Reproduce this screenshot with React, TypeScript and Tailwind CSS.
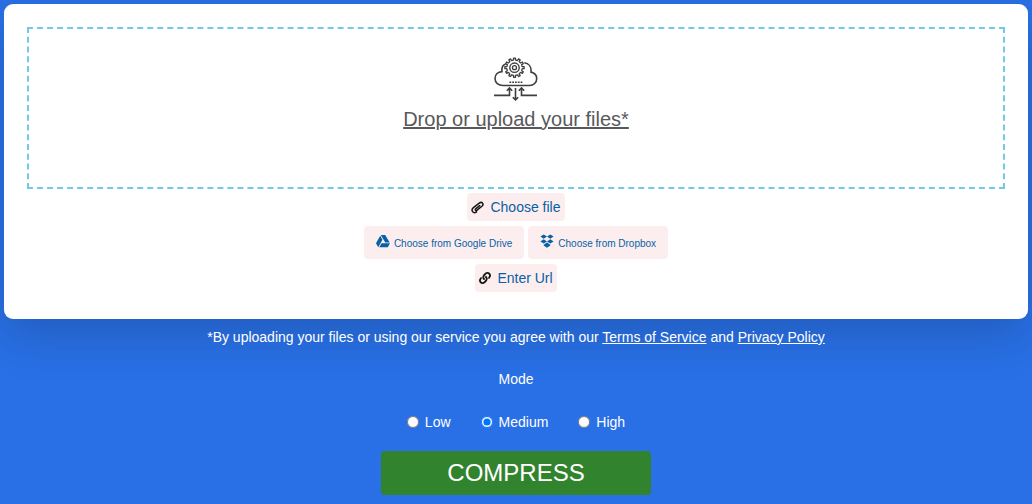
import { FaGoogleDrive, FaLink } from "react-icons/fa";

const MODES = ["Low", "Medium", "High"];

const GEAR_OUTLINE = Array.from({ length: 12 }, (_, tooth) =>
  [
    [-0.5, 7.6],
    [-0.24, 7.8],
    [-0.19, 9.7],
    [0.19, 9.7],
    [0.24, 7.8],
  ]
    .map(([offset, radius]) => {
      const angle = ((tooth + offset) * Math.PI) / 6;
      return `${(20.5 + radius * Math.sin(angle)).toFixed(2)},${(10.7 - radius * Math.cos(angle)).toFixed(2)}`;
    })
    .join(" "),
).join(" ");

function CloudUploadIcon() {
  return (
    <svg
      width="44"
      height="44"
      viewBox="0 0 44 44"
      fill="none"
      stroke="#3d3f40"
      strokeWidth="1.6"
      aria-hidden="true"
    >
      <path d="M9 28.500C4.500 28.500 1 25.600 1 21.500c0-4 3-6.700 7-6.900C7.500 10.800 8.900 7.900 11.700 7M9 28.500h26.500c4.100 0 7.200-3 7.200-6.800 0-3.400-2.300-6-5.700-6.600.5-5.200-2.200-8.800-6.700-9.300" />
      <polygon points={GEAR_OUTLINE} strokeWidth="1.300" strokeLinejoin="round" />
      <circle cx="20.500" cy="10.700" r="4.700" strokeWidth="1.400" />
      <circle cx="20.500" cy="10.700" r="2" strokeWidth="1.300" />
      <path d="M15.400 25.200h13" strokeDasharray="1.800 1" />
      <path d="M0 38.400h15.500V31M12.800 33.700l2.700-2.700 2.700 2.700M43 38.400H27.500V31M24.800 33.700l2.700-2.700 2.700 2.700M21.500 31v11.800M18.800 40.200l2.700 2.700 2.700-2.700" />
    </svg>
  );
}

function ClipIcon() {
  return (
    <svg
      width="13"
      height="13"
      viewBox="0 0 13 13"
      fill="none"
      stroke="#171717"
      strokeWidth="1.500"
      strokeLinecap="round"
      aria-hidden="true"
    >
      <path d="M8.700 4.600 4.900 7.700c-1.300 1.100-.2 2.500 1.200 1.500l4.800-3.900c2.400-2.100.2-5.200-2.700-3.200L2.400 6.600C-.6 9.200 2.200 13.200 5.600 10.900" />
    </svg>
  );
}

function DropboxIcon() {
  return (
    <svg width="14" height="14" viewBox="0 0 14 14" fill="currentColor" className="mb-1" aria-hidden="true">
      <path d="M3.700.4 7 2.600 3.700 4.800.4 2.600zM10.300.4l3.300 2.200-3.300 2.200L7 2.600zM3.700 5.200 7 7.400 3.700 9.600.4 7.400zM10.300 5.200l3.300 2.200-3.300 2.200L7 7.400zM7 8.600l3.300 2.200v.8L7 13.700l-3.300-2.100v-.8z" />
    </svg>
  );
}

export default function App() {
  return (
    <main className="min-h-screen bg-[#2970e6] p-1 text-center font-['Liberation_Sans',Arial,sans-serif] text-sm text-white">
      <section className="rounded-[9px] bg-white px-[23px] pt-[23px] pb-[27px] shadow-[0_16px_48px_rgba(0,0,0,0.18)]">
        <label className="flex h-[162px] cursor-pointer flex-col items-center border-2 border-dashed border-[#72cbe2] pt-7 text-xl leading-7 text-[#58595b]">
          <CloudUploadIcon />
          <span className="mt-1 underline">Drop or upload your files*</span>
          <input type="file" multiple className="sr-only" />
        </label>
        <div className="mt-1 flex flex-col items-center gap-[5px] text-[#0861a4]">
          <button type="button" className="flex h-7 items-center gap-1.5 rounded bg-[#fceeef] px-1">
            <ClipIcon />
            Choose file
          </button>
          <div className="flex gap-1 text-[10px]">
            <button type="button" className="flex h-[33px] items-center gap-1 rounded bg-[#fceeef] px-3">
              <FaGoogleDrive className="mb-1 size-[14px]" />
              <span className="mt-1">Choose from Google Drive</span>
            </button>
            <button type="button" className="flex h-[33px] items-center gap-1 rounded bg-[#fceeef] px-3">
              <DropboxIcon />
              <span className="mt-1">Choose from Dropbox</span>
            </button>
          </div>
          <button type="button" className="flex h-7 items-center gap-1.5 rounded bg-[#fceeef] px-1">
            <FaLink className="size-3 text-[#171717]" />
            Enter Url
          </button>
        </div>
      </section>
      <form onSubmit={(event) => event.preventDefault()}>
        <p className="mt-2">
          *By uploading your files or using our service you agree with our{" "}
          <a href="#terms" className="underline">Terms of Service</a> and{" "}
          <a href="#privacy" className="underline">Privacy Policy</a>
        </p>
        <fieldset className="mt-[22px]">
          <legend className="mx-auto">Mode</legend>
          <div className="mt-[23px] flex justify-center gap-[30px]">
            {MODES.map((mode) => (
              <label key={mode} className="flex items-center gap-1.5">
                <input
                  type="radio"
                  name="mode"
                  value={mode}
                  defaultChecked={mode === "Medium"}
                  className="size-3"
                />
                {mode}
              </label>
            ))}
          </div>
        </fieldset>
        <button
          type="submit"
          className="mt-[19px] h-11 w-[270px] max-w-full rounded bg-[#32832d] text-2xl"
        >
          COMPRESS
        </button>
      </form>
    </main>
  );
}
